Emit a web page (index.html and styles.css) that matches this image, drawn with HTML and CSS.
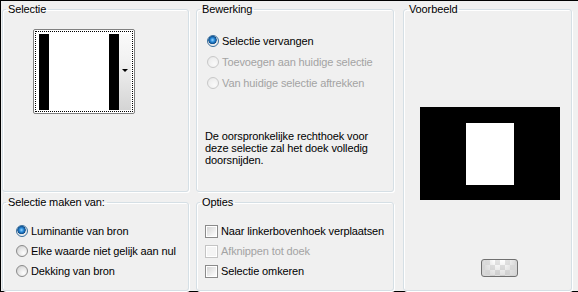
FILE: index.html
```html
<!DOCTYPE html>
<html lang="nl">

<head>
  <meta charset="UTF-8" />
  <title>Selectie</title>
  <link rel="stylesheet" href="styles.css">
</head>

<body>
  <div class="dialog">
    <fieldset class="group sel">
      <legend>Selectie</legend>
      <div class="group-body">
        <div class="thumb">
          <div class="thumb-inner">
            <span class="bar"></span>
            <span class="page"></span>
            <span class="bar"></span>
            <span class="thumb-scroll"><span class="arrow"></span></span>
          </div>
        </div>
      </div>
    </fieldset>

    <fieldset class="group edit">
      <legend>Bewerking</legend>
      <div class="group-body">
        <label class="opt"><span class="radio checked"></span>Selectie vervangen</label>
        <label class="opt disabled"><span class="radio"></span>Toevoegen aan huidige selectie</label>
        <label class="opt disabled"><span class="radio"></span>Van huidige selectie aftrekken</label>
        <p class="note">De oorspronkelijke rechthoek voor deze selectie zal het doek volledig doorsnijden.</p>
      </div>
    </fieldset>

    <fieldset class="group preview">
      <legend>Voorbeeld</legend>
      <div class="group-body">
        <div class="canvas"><span class="canvas-sel"></span></div>
        <button class="bg-btn" type="button"></button>
      </div>
    </fieldset>

    <fieldset class="group source">
      <legend>Selectie maken van:</legend>
      <div class="group-body">
        <label class="opt small"><span class="radio checked"></span>Luminantie van bron</label>
        <label class="opt small"><span class="radio"></span>Elke waarde niet gelijk aan nul</label>
        <label class="opt small"><span class="radio"></span>Dekking van bron</label>
      </div>
    </fieldset>

    <fieldset class="group opts">
      <legend>Opties</legend>
      <div class="group-body">
        <label class="opt small"><span class="check"></span>Naar linkerbovenhoek verplaatsen</label>
        <label class="opt small disabled"><span class="check"></span>Afknippen tot doek</label>
        <label class="opt small"><span class="check"></span>Selectie omkeren</label>
      </div>
    </fieldset>
  </div>
</body>

</html>
```

FILE: styles.css
```css
html,
body {
  margin: 0;
  padding: 0;
}

body {
  font-family: 'Liberation Sans', Arial, sans-serif;
  font-size: 11px;
  letter-spacing: -0.12px;
  color: #000;
  background: #f0f0f0;
}

.dialog {
  width: 578px;
  height: 292px;
  box-sizing: border-box;
  border: 1px solid #000;
  border-right: none;
  padding: 2px 8px 0 1px;
  background: #f0f0f0;
  display: grid;
  grid-template-columns: 187px 198px 167px;
  grid-template-rows: 189px 95px;
  column-gap: 7px;
  row-gap: 4px;
}

.group {
  margin: 0;
  padding: 0;
  min-width: 0;
  border: 1px solid #d5dfe5;
  border-radius: 3px;
  box-shadow: inset 1px 1px 0 #fff, 1px 1px 0 #fff;
}

.group legend {
  margin-left: 3px;
  padding: 0 2px;
  line-height: 13px;
}

.preview {
  grid-row: 1 / 3;
  grid-column: 3;
  width: 167px;
  margin-left: 2px;
}

/* selectie thumbnail */
.sel .group-body {
  padding: 13px 0 0 30px;
}

.thumb {
  width: 102px;
  height: 85px;
  box-sizing: border-box;
  border: 1px solid #808080;
  border-radius: 2px;
  background: #fff;
  padding: 1px;
}

.thumb-inner {
  height: 100%;
  box-sizing: border-box;
  border: 1px dotted #000;
  padding: 2px 1px 1px 3px;
  display: flex;
}

.bar {
  width: 10px;
  background: #000;
}

.page {
  width: 60px;
  background: #fff;
}

.thumb-scroll {
  flex: 1;
  position: relative;
  background: linear-gradient(#fafafa, #f0f0f0 40%, #d4d4d4);
}

.arrow {
  position: absolute;
  left: 3px;
  top: 35px;
  border: 3px solid transparent;
  border-top: 3px solid #000;
  border-bottom: none;
}

/* options */
.edit .group-body {
  padding: 14px 0 0 10px;
}

.source .group-body {
  padding: 12px 0 0 13px;
}

.opts .group-body {
  padding: 12px 0 0 8px;
}

.opt {
  display: flex;
  align-items: center;
  height: 21px;
  white-space: nowrap;
}

.opt.small {
  height: 20px;
}

.opt.disabled {
  color: #a3a3a3;
}

.radio {
  width: 12px;
  height: 12px;
  box-sizing: border-box;
  margin-right: 3px;
  border-radius: 50%;
  border: 1px solid #8a8a8a;
  background: radial-gradient(circle at 65% 70%, #fdfdfd 0, #e8e8e8 45%, #c9c9c9 100%);
}

.radio.checked {
  border-color: #3a6f9c;
  background: radial-gradient(circle at 45% 40%, #9ad5ff 0, #2a8ad8 25%, #0e4c8a 48%, #e6e6e6 55%, #fdfdfd 100%);
}

.disabled .radio {
  border-color: #c8c8c8;
  background: radial-gradient(circle at 65% 70%, #fafafa 0, #efefef 60%, #e2e2e2 100%);
}

.check {
  width: 13px;
  height: 13px;
  box-sizing: border-box;
  margin-right: 3px;
  border: 1px solid #8a8a8a;
  background: linear-gradient(135deg, #d0d0d0, #f4f4f4 70%, #fff);
  box-shadow: inset 0 0 0 1px #fff;
}

.disabled .check {
  border-color: #c4c4c4;
  background: #f4f4f4;
}

.note {
  margin: 37px 0 0 -2px;
  line-height: 12px;
  width: 170px;
}

/* voorbeeld */
.preview .group-body {
  padding: 91px 0 0 16px;
}

.canvas {
  width: 140px;
  height: 93px;
  background: #000;
  display: flex;
  align-items: center;
  justify-content: center;
}

.canvas-sel {
  width: 48px;
  height: 62px;
  background: #fff;
}

.bg-btn {
  display: block;
  margin: 59px 0 0 61px;
  width: 37px;
  height: 18px;
  padding: 0;
  border: 1px solid #707070;
  border-radius: 3px;
  background:
    linear-gradient(to right, #d6d6d6, rgba(230, 230, 230, 0) 35%, rgba(230, 230, 230, 0) 65%, #d6d6d6),
    linear-gradient(rgba(255, 255, 255, 0.4), rgba(200, 200, 200, 0.6)),
    repeating-conic-gradient(#fff 0 25%, #d2d2d2 0 50%) 3px 0 / 10px 10px;
}
```
